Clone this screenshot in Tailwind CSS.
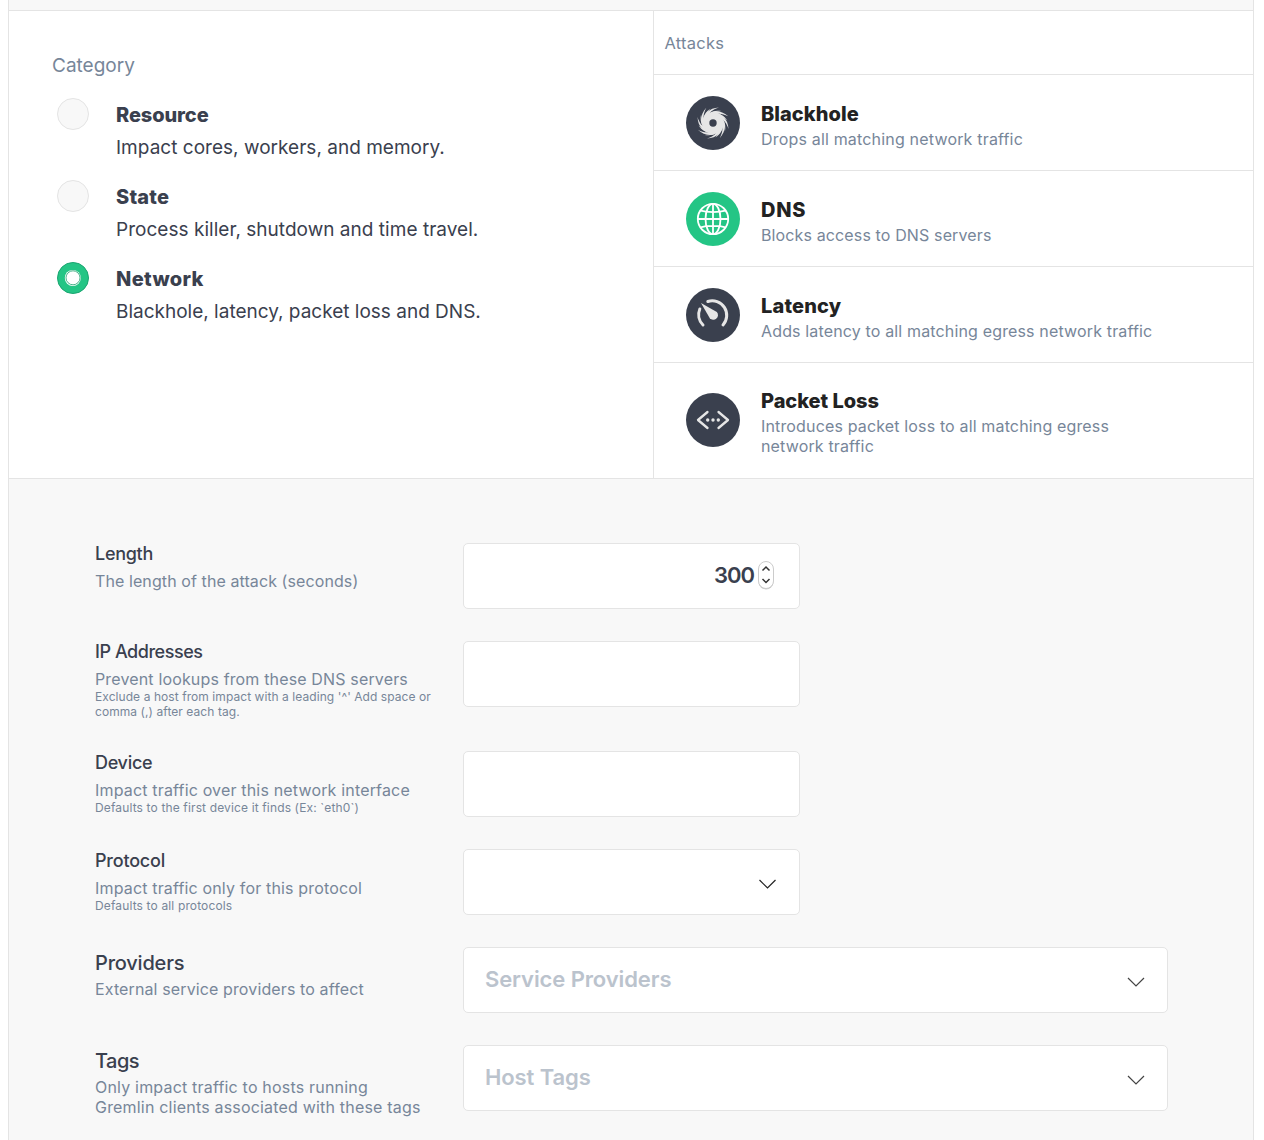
<!DOCTYPE html>
<html lang="en">
<head>
  <meta charset="UTF-8">
  <title>New Attack</title>
  <meta name="viewport" content="width=device-width,initial-scale=1">
  <script src="https://cdn.jsdelivr.net/npm/@tailwindcss/browser@4"></script>
</head>
<body class="bg-white h-[1140px] overflow-hidden font-['Inter','Liberation_Sans',sans-serif] text-[#3a404e]">
  <div class="ml-2 w-[1246px] h-full border-x border-[#e4e4e4] bg-[#f8f8f8] pt-[10px]">

    <!-- category + attacks -->
    <section class="flex h-[469px] border-y border-[#e4e4e4] bg-white">
      <div class="w-[644px] pl-[43px] pt-[43px]">
        <h2 class="text-[19px] leading-6 text-[#778699]">Category</h2>
        <div class="mt-[19px] ml-[5px] flex flex-col">
          <label class="flex h-[82px] gap-[27px]">
            <span class="mt-[1px] size-8 rounded-full border border-[#e4e4e4] bg-[#f8f8f8]"></span>
            <span>
              <b class="block text-[20px] leading-9 font-extrabold tracking-[-0.1px]">Resource</b>
              <span class="block text-[19px] leading-[30px] tracking-[0.02px]">Impact cores, workers, and memory.</span>
            </span>
          </label>
          <label class="flex h-[82px] gap-[27px]">
            <span class="mt-[1px] size-8 rounded-full border border-[#e4e4e4] bg-[#f8f8f8]"></span>
            <span>
              <b class="block text-[20px] leading-9 font-extrabold tracking-[0.2px]">State</b>
              <span class="block text-[19px] leading-[30px] tracking-[0.03px]">Process killer, shutdown and time travel.</span>
            </span>
          </label>
          <label class="flex h-[82px] gap-[27px]">
            <svg class="mt-[1px] size-8" viewBox="0 0 32 32" fill="none">
              <circle cx="16" cy="16" r="15.5" fill="#24c585" stroke="#1ba571"/>
              <circle cx="15.800" cy="16" r="8" fill="#fff"/>
              <circle cx="16" cy="15.800" r="7" stroke="#1f9e6d" stroke-width=".8"/>
            </svg>
            <span>
              <b class="block text-[20px] leading-9 font-extrabold tracking-[0.35px]">Network</b>
              <span class="block text-[19px] leading-[30px]">Blackhole, latency, packet loss and DNS.</span>
            </span>
          </label>
        </div>
      </div>

      <div class="flex-1 border-l border-[#e4e4e4]">
        <h2 class="h-[64px] border-b border-[#e4e4e4] pl-[10.5px] text-[16.5px] leading-[65px] tracking-[0.25px] text-[#778699]">Attacks</h2>
        <div class="flex h-24 gap-[21px] border-b border-[#e4e4e4] pl-8 pt-[21px]">
          <svg class="size-[54px]" viewBox="-27 -27 54 54">
            <circle r="27" fill="#3a404e"/>
            <g fill="#e6e6e6">
              <circle r="10.500"/>
              <g id="arms">
                <path id="arm" d="M-10 -2C-9.500 -9 -4 -15 6 -15.500C0 -13.500 -3.500 -11 -4.500 -7Z"/>
                <use href="#arm" transform="rotate(45)"/>
                <use href="#arm" transform="rotate(90)"/>
                <use href="#arm" transform="rotate(135)"/>
                <use href="#arm" transform="rotate(180)"/>
                <use href="#arm" transform="rotate(225)"/>
                <use href="#arm" transform="rotate(270)"/>
                <use href="#arm" transform="rotate(315)"/>
              </g>
              <use href="#arms" transform="rotate(14) scale(.88)"/>
            </g>
            <circle r="3.700" fill="#3a404e"/>
          </svg>
          <div class="pt-[6px]">
            <h3 class="text-[20px] leading-6 font-extrabold tracking-[0.05px] text-[#222]">Blackhole</h3>
            <p class="mt-[3px] text-[16px] leading-5 tracking-[0.18px] text-[#778699]">Drops all matching network traffic</p>
          </div>
        </div>
        <div class="flex h-24 gap-[21px] border-b border-[#e4e4e4] pl-8 pt-[21px]">
          <svg class="size-[54px]" viewBox="-27 -27 54 54">
            <circle r="27" fill="#24c585"/>
            <g fill="none" stroke="#fff" stroke-width="1.800">
              <circle r="15.200"/>
              <ellipse rx="7.500" ry="15.200"/>
              <path d="M0 -15V15M-15 0H15M-12.500 -8.300C-6 -6.500 6 -6.500 12.500 -8.300M-12.500 8.300C-6 6.500 6 6.500 12.500 8.300"/>
            </g>
          </svg>
          <div class="pt-[6px]">
            <h3 class="text-[20px] leading-6 font-extrabold tracking-[0.7px] text-[#222]">DNS</h3>
            <p class="mt-[3px] text-[16px] leading-5 tracking-[0.13px] text-[#778699]">Blocks access to DNS servers</p>
          </div>
        </div>
        <div class="flex h-24 gap-[21px] border-b border-[#e4e4e4] pl-8 pt-[21px]">
          <svg class="size-[54px]" viewBox="-27 -27 54 54">
            <circle r="27" fill="#3a404e"/>
            <path d="M-5.200 -13.500A14.500 14.500 0 0 1 10 10M-13.200 -6A14.500 14.500 0 0 0 -10 10" fill="none" stroke="#e6e6e6" stroke-width="3" stroke-linecap="round"/>
            <path d="M-12 -12L3.800 -3A4.600 4.600 0 1 1 -3.200 3.200Z" fill="#e6e6e6"/>
          </svg>
          <div class="pt-[6px]">
            <h3 class="text-[20px] leading-6 font-extrabold tracking-[0.15px] text-[#222]">Latency</h3>
            <p class="mt-[3px] text-[16px] leading-5 tracking-[0.15px] text-[#778699]">Adds latency to all matching egress network traffic</p>
          </div>
        </div>
        <div class="flex gap-[21px] pl-8 pt-[26px]">
          <svg class="mt-[4px] size-[54px]" viewBox="-27 -27 54 54">
            <circle r="27" fill="#3a404e"/>
            <path d="M-5.500 -8L-15 0L-5.500 8M5.500 -8L15 0L5.500 8" fill="none" stroke="#e6e6e6" stroke-width="2.300" stroke-linecap="round" stroke-linejoin="round"/>
            <g fill="#e6e6e6"><circle cx="-5.300" r="1.700"/><circle r="1.700"/><circle cx="5.300" r="1.700"/></g>
          </svg>
          <div>
            <h3 class="text-[20px] leading-6 font-extrabold tracking-[-0.05px] text-[#222]">Packet Loss</h3>
            <p class="mt-[3px] text-[16px] leading-5 tracking-[0.15px] text-[#778699]">Introduces packet loss to all matching egress<br>network traffic</p>
          </div>
        </div>
      </div>
    </section>

    <!-- attack options -->
    <section class="flex flex-col gap-8 pl-[86px] pt-16">
      <div class="flex h-[66px]">
        <div class="w-[368px] text-[#778699]">
          <h3 class="pt-px text-[18px] leading-5 font-medium tracking-[-0.3px] text-[#3a404e]">Length</h3>
          <p class="mt-[7px] text-[16px] leading-5 tracking-[0.09px]">The length of the attack (seconds)</p>
        </div>
        <div class="flex h-[66px] w-[337px] items-center justify-end gap-[3px] rounded-[5px] border border-[#e4e4e4] bg-white pr-[24px] pb-[2px]">
          <span class="text-[22px] leading-6 font-semibold tracking-[-1px]">300</span>
          <svg class="h-[32px] w-[18px]" viewBox="0 0 18 32" fill="none">
            <rect x="1.500" y="3.500" width="15" height="27" rx="7.500" fill="#ccc"/>
            <rect x="1.500" y="2.500" width="15" height="27" rx="7.500" fill="#fff" stroke="#ccc"/>
            <path d="M5.500 11.500L9 8L12.500 11.500M5.500 20L9 23.500L12.500 20" stroke="#333" stroke-width="1.500"/>
          </svg>
        </div>
      </div>

      <div class="flex h-[78px]">
        <div class="w-[368px] text-[#778699]">
          <h3 class="pt-px text-[18px] leading-5 font-medium tracking-[-0.45px] text-[#3a404e]">IP Addresses</h3>
          <p class="mt-[7px] text-[16px] leading-5 tracking-[0.15px]">Prevent lookups from these DNS servers</p>
          <p class="text-[12px] leading-[15px] tracking-[0.07px]">Exclude a host from impact with a leading '^' Add space or<br>comma (,) after each tag.</p>
        </div>
        <div class="h-[66px] w-[337px] rounded-[5px] border border-[#e4e4e4] bg-white"></div>
      </div>

      <div class="flex h-[66px]">
        <div class="w-[368px] text-[#778699]">
          <h3 class="pt-[2px] text-[18px] leading-5 font-medium tracking-[-0.3px] text-[#3a404e]">Device</h3>
          <p class="mt-[7px] text-[16px] leading-5 tracking-[0.17px]">Impact traffic over this network interface</p>
          <p class="text-[12px] leading-[15px] tracking-[0.14px]">Defaults to the first device it finds (Ex: `eth0`)</p>
        </div>
        <div class="h-[66px] w-[337px] rounded-[5px] border border-[#e4e4e4] bg-white"></div>
      </div>

      <div class="flex h-[66px]">
        <div class="w-[368px] text-[#778699]">
          <h3 class="pt-[2px] text-[18px] leading-5 font-medium tracking-[-0.2px] text-[#3a404e]">Protocol</h3>
          <p class="mt-[7px] text-[16px] leading-5 tracking-[0.16px]">Impact traffic only for this protocol</p>
          <p class="text-[12px] leading-[15px] tracking-[0.14px]">Defaults to all protocols</p>
        </div>
        <div class="flex h-[66px] w-[337px] items-center justify-end rounded-[5px] border border-[#e4e4e4] bg-white pr-[23px] pt-[3px]">
          <svg class="h-[10px] w-[18px]" viewBox="0 0 18 10" fill="none" stroke="#222" stroke-width="1.200"><path d="M1.500 1L9.500 9L17.500 1"/></svg>
        </div>
      </div>

      <div class="flex h-[66px]">
        <div class="w-[368px] text-[#778699]">
          <h3 class="text-[20px] leading-8 font-medium tracking-[-0.2px] text-[#3a404e]">Providers</h3>
          <p class="text-[16px] leading-5 tracking-[0.12px]">External service providers to affect</p>
        </div>
        <div class="flex h-[66px] w-[705px] items-center justify-between rounded-[5px] border border-[#e4e4e4] bg-white pl-[21px] pr-[22px]">
          <span class="mb-[2px] text-[22px] leading-6 font-semibold tracking-[-0.1px] text-[#bbc3cd]">Service Providers</span>
          <svg class="mt-[4px] h-[10px] w-[18px]" viewBox="0 0 18 10" fill="none" stroke="#444" stroke-width="1.200"><path d="M1 1L9 9L17 1"/></svg>
        </div>
      </div>

      <div class="flex h-[66px]">
        <div class="w-[368px] text-[#778699]">
          <h3 class="text-[20px] leading-8 font-medium tracking-[-0.5px] text-[#3a404e]">Tags</h3>
          <p class="text-[16px] leading-5 tracking-[0.19px]">Only impact traffic to hosts running<br>Gremlin clients associated with these tags</p>
        </div>
        <div class="flex h-[66px] w-[705px] items-center justify-between rounded-[5px] border border-[#e4e4e4] bg-white pl-[21px] pr-[22px]">
          <span class="mb-[2px] text-[22px] leading-6 font-semibold tracking-[-0.1px] text-[#bbc3cd]">Host Tags</span>
          <svg class="mt-[4px] h-[10px] w-[18px]" viewBox="0 0 18 10" fill="none" stroke="#444" stroke-width="1.200"><path d="M1 1L9 9L17 1"/></svg>
        </div>
      </div>
    </section>
  </div>
</body>
</html>
